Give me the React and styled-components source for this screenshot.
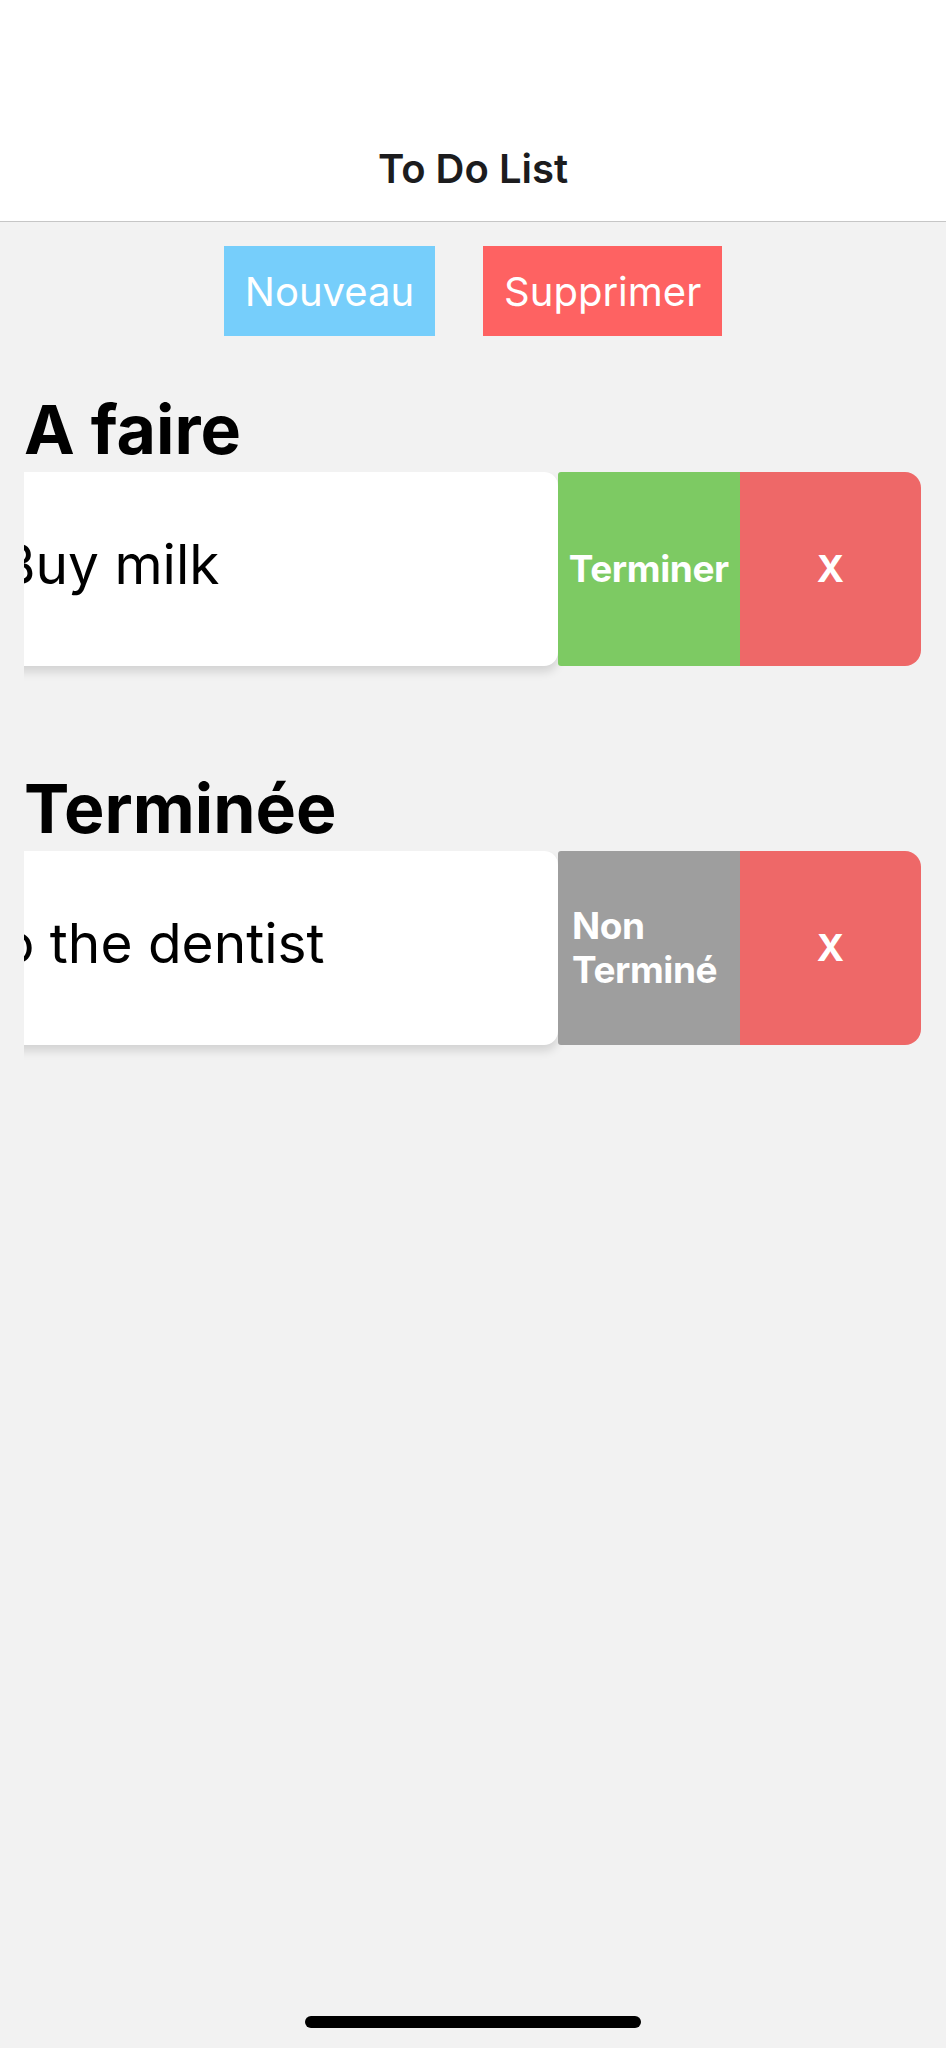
import React from 'react'
import styled, { createGlobalStyle } from 'styled-components'

const GlobalStyle = createGlobalStyle`
  html, body {
    margin: 0;
    padding: 0;
    background: #f2f2f2;
  }
  body {
    font-family: Inter, "Noto Sans", "Liberation Sans", sans-serif;
    -webkit-font-smoothing: antialiased;
  }
`

const Screen = styled.div`
  position: relative;
  min-height: 2048px;
  background: #f2f2f2;
  overflow: hidden;
`

const Header = styled.header`
  box-sizing: border-box;
  height: 222px;
  padding-top: 111px;
  background: #fff;
  border-bottom: 1px solid #c6c6c6;
  display: flex;
  align-items: center;
  justify-content: center;
`

const Title = styled.h1`
  margin: 0;
  font-size: 40px;
  font-weight: 600;
  color: #1c1c1e;
  line-height: 1;
  transform: translateY(3px);
`

const Toolbar = styled.div`
  display: flex;
  justify-content: center;
  gap: 48px;
  margin-top: 24px;
`

const ToolButton = styled.button`
  height: 90px;
  padding: 0 21px;
  border: 0;
  border-radius: 0;
  background: ${p => p.color};
  color: #fff;
  font-family: inherit;
  font-size: 40px;
  font-weight: 400;
  cursor: pointer;
`

const Section = styled.section`
  padding: 0 25px 0 24px;
  margin-top: ${p => p.gap}px;
`

const Heading = styled.h2`
  margin: 0;
  font-size: 68px;
  font-weight: 700;
  line-height: 86px;
  color: #000;
`

// clips the swiped card on the left, leaves room for its shadow below
const RowClip = styled.div`
  overflow: hidden;
  padding-bottom: 24px;
`

const Track = styled.div`
  display: flex;
  height: 194px;
  transform: translateX(${p => p.offset}px);
`

const Card = styled.div`
  flex: 0 0 100%;
  box-sizing: border-box;
  display: flex;
  align-items: center;
  justify-content: center;
  padding-bottom: 10px;
  background: #fff;
  border-radius: 14px;
  box-shadow: 0 6px 10px rgba(0, 0, 0, 0.13);
  font-size: 55px;
  color: #000;
  white-space: nowrap;
`

const Action = styled.button`
  flex: 0 0 181.5px;
  min-width: 0;
  box-sizing: border-box;
  display: flex;
  align-items: center;
  justify-content: center;
  padding: 0 14px;
  border: 0;
  background: ${p => p.color};
  border-radius: ${p => (p.last ? '0 16px 16px 0' : '3px 0 0 3px')};
  color: #fff;
  font-family: inherit;
  font-size: 37px;
  font-weight: 700;
  letter-spacing: -0.4px;
  line-height: 44px;
  text-align: left;
  white-space: ${p => (p.wrap ? 'normal' : 'nowrap')};
  cursor: pointer;
`

const HomeIndicator = styled.div`
  position: absolute;
  left: 305px;
  bottom: 20px;
  width: 336px;
  height: 12px;
  border-radius: 6px;
  background: #000;
`

const SWIPE = -363

function TodoRow({ text, toggleLabel, toggleColor }) {
  return (
    <RowClip>
      <Track offset={SWIPE}>
        <Card>{text}</Card>
        <Action color={toggleColor} wrap={toggleLabel.includes(' ') ? 1 : 0}>
          <span>{toggleLabel}</span>
        </Action>
        <Action color="#ee6868" last>
          <span>X</span>
        </Action>
      </Track>
    </RowClip>
  )
}

export default function App() {
  return (
    <Screen>
      <GlobalStyle />
      <Header>
        <Title>To Do List</Title>
      </Header>
      <Toolbar>
        <ToolButton color="#76cefb">Nouveau</ToolButton>
        <ToolButton color="#fe6262">Supprimer</ToolButton>
      </Toolbar>
      <Section gap={50}>
        <Heading>A faire</Heading>
        <TodoRow text="Buy milk" toggleLabel="Terminer" toggleColor="#7dca63" />
      </Section>
      <Section gap={75}>
        <Heading>Terminée</Heading>
        <TodoRow text="Go to the dentist" toggleLabel="Non Terminé" toggleColor="#9e9e9e" />
      </Section>
      <HomeIndicator />
    </Screen>
  )
}
